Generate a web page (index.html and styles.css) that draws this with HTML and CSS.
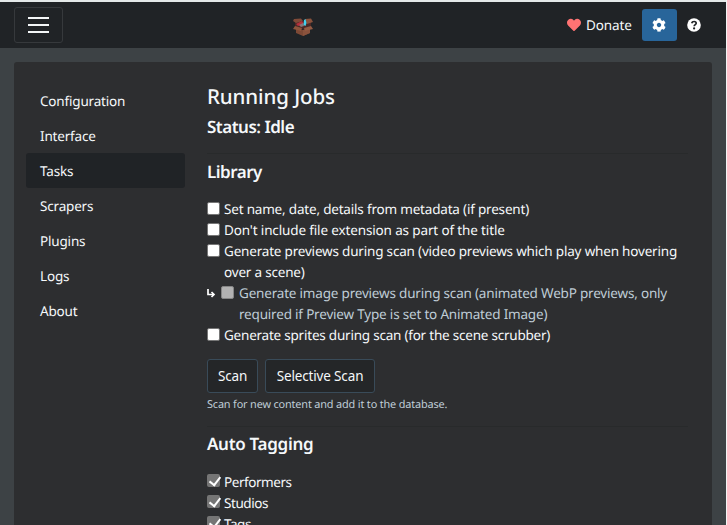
FILE: index.html
```html
<!DOCTYPE html>
<html lang="en">
<head>
<meta charset="utf-8">
<title>Settings</title>
<link rel="stylesheet" href="styles.css">
</head>
<body>
<div class="app">
  <nav class="navbar">
    <button class="toggler" aria-label="Menu"><span></span><span></span><span></span></button>
    <svg class="logo" width="20" height="18" viewBox="0 0 20 18">
      <path d="M3 10 10 12 17 10V15L10 18 3 15Z" fill="#7d4935"/>
      <path d="M10 12 17 10V15L10 18Z" fill="#8a523c"/>
      <path d="M2 4 10 3 18 4V9L10 11 2 9Z" fill="#4c2926"/>
      <path d="M1 1 8 0.500 10 3 3 5 0 3Z" fill="#804a38"/>
      <path d="M12 1 18 0.500 20 4 14 6Z" fill="#8a523c"/>
      <path d="M3 6 9 3 11 6 5 8Z" fill="#b72e3b"/>
      <path d="M6 7 10 5 11 8 8 9Z" fill="#8b7777"/>
      <path d="M11 2 12.500 1 13.500 5 12.500 8 10.500 7Z" fill="#43d2ee"/>
      <path d="M2 8 9 10 8 13 0 11Z" fill="#8e553d"/>
      <path d="M11 10 18 8 20 11 12 13Z" fill="#945b43"/>
    </svg>
    <div class="nav-actions">
      <a class="donate"><svg width="14" height="14" viewBox="0 0 512 512"><path fill="#ff7373" d="M462.3 62.6C407.5 15.900 326 24.300 275.700 76.200L256 96.500 236.300 76.200C186.100 24.300 104.500 15.900 49.700 62.600c-62.800 53.600-66.100 149.800-9.900 207.900l193.500 199.800c12.500 12.900 32.800 12.900 45.300 0l193.500-199.800c56.300-58.100 53-154.300-9.800-207.900z"/></svg><span>Donate</span></a>
      <button class="settings" aria-label="Settings"><svg width="14" height="14" viewBox="0 0 512 512"><path fill="#fff" d="M487.400 315.700l-42.600-24.600c4.300-23.200 4.300-47 0-70.200l42.600-24.600c4.900-2.800 7.100-8.600 5.500-14-11.100-35.600-30-67.800-54.700-94.600-3.800-4.100-10-5.100-14.800-2.300L380.800 110c-17.900-15.400-38.500-27.300-60.800-35.100V25.800c0-5.600-3.900-10.500-9.400-11.700-36.700-8.200-74.300-7.800-109.200 0-5.500 1.200-9.400 6.100-9.400 11.700V75c-22.200 7.900-42.800 19.800-60.800 35.100L88.700 85.500c-4.900-2.800-11-1.900-14.800 2.300-24.700 26.700-43.600 58.900-54.700 94.600-1.700 5.400.6 11.200 5.500 14L67.300 221c-4.300 23.200-4.300 47 0 70.200l-42.600 24.600c-4.900 2.800-7.100 8.600-5.500 14 11.100 35.600 30 67.800 54.700 94.600 3.800 4.100 10 5.100 14.800 2.300l42.600-24.600c17.900 15.400 38.500 27.300 60.800 35.100v49.200c0 5.600 3.900 10.500 9.400 11.700 36.700 8.200 74.300 7.800 109.200 0 5.500-1.200 9.400-6.100 9.400-11.700v-49.200c22.200-7.900 42.800-19.800 60.800-35.100l42.600 24.600c4.900 2.800 11 1.900 14.800-2.300 24.700-26.700 43.600-58.900 54.700-94.600 1.500-5.500-.7-11.300-5.600-14.100zM256 336c-44.100 0-80-35.900-80-80s35.900-80 80-80 80 35.900 80 80-35.900 80-80 80z"/></svg></button>
      <svg class="help" width="14" height="14" viewBox="0 0 14 14"><circle cx="7" cy="7" r="6.800" fill="#fff"/><path d="M4.700 5.300C5 4 6 3.500 7.100 3.500c1.200 0 2.100.7 2.100 1.800C9.200 6.700 7.200 6.600 7.200 8.300" fill="none" stroke="#202326" stroke-width="1.700"/><circle cx="7.100" cy="10.400" r="1.100" fill="#202326"/></svg>
    </div>
  </nav>
  <main class="card">
    <aside class="tabs">
      <a>Configuration</a><a>Interface</a><a class="active">Tasks</a><a>Scrapers</a><a>Plugins</a><a>Logs</a><a>About</a>
    </aside>
    <section class="content">
      <h4>Running Jobs</h4>
      <h5 class="status">Status: Idle</h5>
      <hr>
      <h5 class="library">Library</h5>
      <div class="options scan-options">
        <label class="check"><input type="checkbox"><span>Set name, date, details from metadata (if present)</span></label>
        <label class="check"><input type="checkbox"><span class="looser">Don't include file extension as part of the title</span></label>
        <label class="check"><input type="checkbox"><span>Generate previews during scan (video previews which play when hovering<br>over a scene)</span></label>
        <div class="nested">
          <svg width="10" height="12" viewBox="0 0 10 12"><path d="M1 2V7.500H6.500M4.500 5 7 7.500 4.500 10" fill="none" stroke="#fff" stroke-width="1.700"/></svg>
          <label class="check muted"><input type="checkbox" disabled><span>Generate image previews during scan (animated WebP previews, only<br>required if Preview Type is set to Animated Image)</span></label>
        </div>
        <label class="check"><input type="checkbox"><span class="tighter">Generate sprites during scan (for the scene scrubber)</span></label>
      </div>
      <div class="buttons"><button class="btn scan">Scan</button><button class="btn selective">Selective Scan</button></div>
      <small>Scan for new content and add it to the database.</small>
      <hr class="second">
      <h5 class="tagging">Auto Tagging</h5>
      <div class="options tag-options">
        <label class="check"><input type="checkbox" checked><span>Performers</span></label>
        <label class="check"><input type="checkbox" checked><span>Studios</span></label>
        <label class="check"><input type="checkbox" checked><span>Tags</span></label>
      </div>
    </section>
  </main>
</div>
</body>
</html>
```
FILE: styles.css
```css
* { box-sizing: border-box; }
body {
  margin: 0;
  height: 525px;
  overflow: hidden;
  background: #f3f4f4;
  color: #f5f8fa;
  font: 13.5px/21px "Noto Sans", sans-serif;
  text-rendering: geometricPrecision;
}
.app {
  height: 525px;
  margin-right: 1px;
  border-top: 2px solid #e4e9e9;
  background: #3d4245;
  overflow: hidden;
}
.navbar {
  height: 46px;
  padding: 0 14px;
  display: grid;
  grid-template-columns: 279px 1fr auto;
  align-items: center;
  background: #202326;
}
button { font: inherit; color: inherit; }
.toggler {
  width: 49px;
  height: 36px;
  padding: 0;
  display: flex;
  flex-direction: column;
  align-items: center;
  justify-content: center;
  gap: 5px;
  border: 1px solid #36393c;
  border-radius: 3px;
  background: none;
}
.toggler span { width: 21px; height: 2px; background: #f3f6f7; }
.logo { margin-top: 4px; }
.nav-actions { display: flex; align-items: center; }
.donate { display: flex; align-items: center; gap: 5px; margin-right: 10px; }
.donate span { width: 46px; letter-spacing: -0.1px; white-space: nowrap; }
.settings {
  width: 35px;
  height: 32px;
  padding: 0 1px 0 0;
  display: flex;
  align-items: center;
  justify-content: center;
  border: 0;
  border-radius: 3px;
  background: #28659a;
}
.help { margin: 0 11px 0 10px; }
.card {
  height: 600px;
  margin: 14px 14px 0;
  padding: 21px 24px 0 12px;
  display: grid;
  grid-template-columns: 159px 1fr;
  column-gap: 22px;
  border-radius: 3px;
  background: #2d2e30;
}
.tabs { display: flex; flex-direction: column; letter-spacing: -0.18px; }
.tabs a { height: 35px; padding: 8px 14px 6px; border-radius: 3px; }
.tabs .active { background: #202326; }
h4, h5 { margin: 0; white-space: nowrap; }
h4 { font-size: 20.5px; line-height: 25px; margin-top: 2px; font-weight: 500; letter-spacing: -0.1px; }
h5 { font-size: 17px; line-height: 21px; font-weight: 600; letter-spacing: -0.5px; }
.status { margin-top: 6px; }
hr { height: 1px; margin: 16px 0 7px; border: 0; background: #282a2b; }
.options { margin-top: 17px; }
.scan-options { letter-spacing: -0.19px; }
.looser { letter-spacing: -0.14px; }
.tighter { letter-spacing: -0.22px; }
.tag-options { margin-top: 18px; letter-spacing: -0.45px; }
.check { display: flex; align-items: flex-start; gap: 4px; white-space: nowrap; }
input {
  appearance: none;
  flex: none;
  width: 13px;
  height: 13px;
  margin: 3px 0 0;
  border: 1px solid #767676;
  border-radius: 2px;
  background: #fff;
}
.tag-options input { margin-top: 2px; }
input:disabled { background: #b2b2b2; border-color: #858585; }
input:checked {
  border: 0;
  background: #757575;
}
input:checked::before {
  content: "";
  display: block;
  width: 5px;
  height: 9px;
  margin: 1px 0 0 5px;
  border: solid #fff;
  border-width: 0 2px 2px 0;
  transform: translate(-0.5px, -0.5px) rotate(38deg);
}
.nested { display: flex; gap: 4px; }
.nested svg { margin-top: 4px; flex: none; }
.muted { color: #bfccd6; gap: 5px; }
.buttons { display: flex; gap: 7px; margin-top: 13px; }
.btn {
  height: 34px;
  padding: 0;
  border: 1px solid #394b59;
  border-radius: 3px;
  background: #242628;
  letter-spacing: -0.15px;
  white-space: nowrap;
}
.scan { width: 51px; }
.selective { width: 110px; }
small { display: block; margin-top: 4px; font-size: 10.9px; line-height: 16px; letter-spacing: -0.16px; color: #bfccd6; white-space: nowrap; }
.second { margin: 13px 0 7px; }
.tagging { margin-top: -1px; letter-spacing: -0.3px; }
```
